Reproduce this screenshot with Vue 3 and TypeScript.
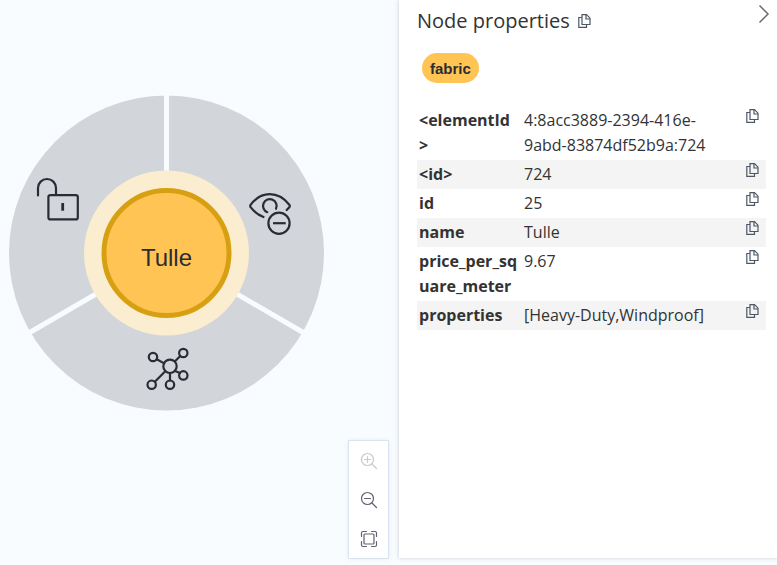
<script setup lang="ts">
import { defineComponent, h, ref } from 'vue'

interface Property {
  key: string
  value: string
}

const label = ref('fabric')
const caption = ref('Tulle')

const properties: Property[] = [
  { key: '<elementId>', value: '4:8acc3889-2394-416e-9abd-83874df52b9a:724' },
  { key: '<id>', value: '724' },
  { key: 'id', value: '25' },
  { key: 'name', value: 'Tulle' },
  { key: 'price_per_square_meter', value: '9.67' },
  { key: 'properties', value: '[Heavy-Duty,Windproof]' },
]

const CopyIcon = defineComponent({
  render: () =>
    h('svg', { width: 13, height: 14, viewBox: '0 0 13 14', fill: 'none', stroke: 'currentColor', 'stroke-width': 1.2, 'aria-hidden': 'true' }, [
      h('path', { d: 'M4 .7H8.5L12 4.2V10.5H4Z' }),
      h('path', { d: 'M8 1V5H12' }),
      h('path', { d: 'M4 3.5H.8V13.4H8.5V10.6' }),
    ]),
})

function copy(text: string): void {
  void navigator.clipboard?.writeText(text)
}

function copyAll(): void {
  copy(properties.map((p) => `${p.key}: ${p.value}`).join('\n'))
}
</script>

<template>
  <main class="frame">
    <section class="graph" aria-label="Graph">
      <div class="node-menu">
        <svg class="ring" viewBox="0 0 315 316" aria-hidden="true">
          <circle class="wedges" cx="157.5" cy="158" r="157.5" />
          <path class="dividers" d="M157.5 158V0M157.5 158L19 238.5M157.5 158L296 238.5" />
          <circle class="halo" cx="157.5" cy="158" r="82.5" />
          <circle class="node" cx="157.5" cy="158" r="62.5" />
          <text class="caption" x="157.5" y="171">{{ caption }}</text>
        </svg>
        <button class="action unlock" type="button" aria-label="Unlock node">
          <svg viewBox="0 0 48 48" aria-hidden="true">
            <path d="M4 19.5V12a9 9 0 0 1 18 0V19" />
            <rect x="14.4" y="19.1" width="29.4" height="24.3" rx="2" />
            <path d="M28.7 27V34.7" stroke-width="2.8" stroke-linecap="butt" />
          </svg>
        </button>
        <button class="action hide" type="button" aria-label="Hide node">
          <svg viewBox="0 0 48 48" aria-hidden="true">
            <path d="M40.7 22L43.3 19.2Q44.3 18 43.3 16.8C38 10 31 6.2 23.8 6.2S9.8 10 4.6 16.8Q3.8 18 4.6 19.2C8.3 24 12.5 27.3 17.5 29" />
            <path d="M21.3 24.2A6.8 6.8 0 1 1 30 20.8" />
            <circle cx="33" cy="35.2" r="10.6" />
            <path d="M27 35.2H39.7" stroke-linecap="butt" />
          </svg>
        </button>
        <button class="action expand" type="button" aria-label="Expand relationships">
          <svg viewBox="0 0 48 48" aria-hidden="true">
            <circle cx="26" cy="22.3" r="6.7" />
            <circle cx="9" cy="13" r="4.2" />
            <circle cx="39.3" cy="9" r="4.2" />
            <circle cx="39.3" cy="31.4" r="4.2" />
            <circle cx="26" cy="40.7" r="4.2" />
            <circle cx="7.7" cy="40.7" r="4.2" />
            <path d="M12.7 15.3L20.2 19.4M36.3 12L31 17.3M31 27L36 29M26 29V36.5M21.3 27.3L10.8 37.7" />
          </svg>
        </button>
      </div>

      <div class="zoom-controls" role="toolbar" aria-label="Zoom">
        <button type="button" aria-label="Zoom in" disabled>
          <svg viewBox="0 0 18 18" aria-hidden="true">
            <circle cx="7.5" cy="7.5" r="6" />
            <path d="M12 12L16.5 16.5M4.5 7.5H10.5M7.5 4.5V10.5" />
          </svg>
        </button>
        <button type="button" aria-label="Zoom out">
          <svg viewBox="0 0 18 18" aria-hidden="true">
            <circle cx="7.5" cy="7.5" r="6" />
            <path d="M12 12L16.5 16.5M4.5 7.5H10.5" />
          </svg>
        </button>
        <button type="button" aria-label="Zoom to fit">
          <svg viewBox="0 0 18 18" aria-hidden="true">
            <rect x="4" y="4" width="10" height="10" rx="1" />
            <path d="M1.5 6.5V3Q1.5 1.5 3 1.5H6.5M11.5 1.5H15Q16.5 1.5 16.5 3V6.5M16.5 11.5V15Q16.5 16.5 15 16.5H11.5M6.5 16.5H3Q1.5 16.5 1.5 15V11.5" />
          </svg>
        </button>
      </div>
    </section>

    <aside class="panel">
      <header class="heading">
        <h1>Node properties</h1>
        <button class="copy" type="button" aria-label="Copy all properties" @click="copyAll">
          <CopyIcon />
        </button>
        <button class="collapse" type="button" aria-label="Collapse panel">
          <svg width="12" height="20" viewBox="0 0 12 20" aria-hidden="true">
            <path d="M1.5 1.5L10 10L1.5 18.5" />
          </svg>
        </button>
      </header>
      <button class="label" type="button">{{ label }}</button>
      <table class="properties">
        <tbody>
          <tr v-for="p in properties" :key="p.key">
            <th scope="row">{{ p.key }}</th>
            <td>{{ p.value }}</td>
            <td class="tools">
              <button class="copy" type="button" :aria-label="`Copy ${p.key}`" @click="copy(p.value)">
                <CopyIcon />
              </button>
            </td>
          </tr>
        </tbody>
      </table>
    </aside>
  </main>
</template>

<style>
body {
  margin: 0;
  background: #f9fcff;
}
</style>

<style scoped>
.frame {
  display: flex;
  box-sizing: border-box;
  min-height: 100vh;
  padding-bottom: 7px;
  background: #f9fcff;
  color: #333;
  font-family: 'Open Sans', sans-serif;
  font-size: 16px;
  line-height: 25px;
}

button {
  margin: 0;
  padding: 0;
  border: 0;
  background: none;
  color: inherit;
  font: inherit;
  cursor: pointer;
}

svg {
  display: block;
}

.graph {
  display: flex;
  flex: 1;
  justify-content: space-between;
  padding: 0 11px 0 9px;
}

.node-menu {
  position: relative;
  align-self: flex-start;
  width: 315px;
  margin-top: 95px;
}

.ring {
  width: 100%;
}

.wedges {
  fill: #d2d5da;
}

.dividers {
  fill: none;
  stroke: #f9fcff;
  stroke-width: 5;
}

.halo {
  fill: #fbedcf;
}

.node {
  fill: #ffc454;
  stroke: #d7a013;
  stroke-width: 5;
}

.caption {
  fill: #2a2c34;
  font-family: 'Liberation Sans', Arial, sans-serif;
  font-size: 24px;
  text-anchor: middle;
}

.action {
  position: absolute;
  width: 48px;
  height: 48px;
}

.action svg {
  fill: none;
  stroke: #2a2c34;
  stroke-width: 2.2;
  stroke-linecap: round;
  stroke-linejoin: round;
}

.unlock {
  left: 25px;
  top: 81px;
}

.hide {
  left: 237px;
  top: 93px;
}

.expand {
  left: 135px;
  top: 249px;
}

.zoom-controls {
  display: flex;
  flex-direction: column;
  align-self: flex-end;
  width: 39px;
  background: #fff;
  box-shadow: 0 0 0 1px #dae4f0, 0 0 5px rgba(50, 70, 100, 0.15);
}

.zoom-controls button {
  display: grid;
  place-items: center;
  height: 39px;
  color: #5e636f;
}

.zoom-controls button:disabled {
  color: #c9cbd0;
  cursor: default;
}

.zoom-controls svg {
  width: 18px;
  height: 18px;
  fill: none;
  stroke: currentColor;
  stroke-width: 1.2;
  stroke-linecap: round;
}

.panel {
  flex: 0 0 378px;
  box-sizing: border-box;
  padding: 4px 11px 0 18px;
  background: #fff;
  box-shadow: 0 0 4px rgba(50, 60, 80, 0.25);
}

.heading {
  display: flex;
  align-items: center;
  gap: 8px;
  height: 33px;
}

h1 {
  margin: 0;
  font-size: 20px;
  font-weight: 400;
}

.copy {
  display: block;
  color: #4d5766;
}

.collapse {
  align-self: flex-start;
  margin: 0 -4px 0 auto;
}

.collapse path {
  fill: none;
  stroke: #6b6b6b;
  stroke-width: 1.5;
}

.label {
  display: block;
  height: 30px;
  margin: 16px 5px 23px;
  padding: 0 8px;
  border-radius: 15px;
  background: #ffc454;
  color: #2a2c34;
  font-family: 'Liberation Sans', Arial, sans-serif;
  font-size: 15px;
  font-weight: 700;
}

.properties {
  width: 100%;
  border-collapse: collapse;
  table-layout: fixed;
}

tr:nth-child(even) {
  background: #f4f4f4;
}

th,
td {
  padding: 2px;
  text-align: left;
  vertical-align: top;
  overflow-wrap: anywhere;
}

th {
  width: 99px;
  padding-right: 4px;
  font-weight: 700;
}

.tools {
  width: 40px;
  padding: 3px 7px 0 0;
}

.tools .copy {
  margin-left: auto;
}
</style>
